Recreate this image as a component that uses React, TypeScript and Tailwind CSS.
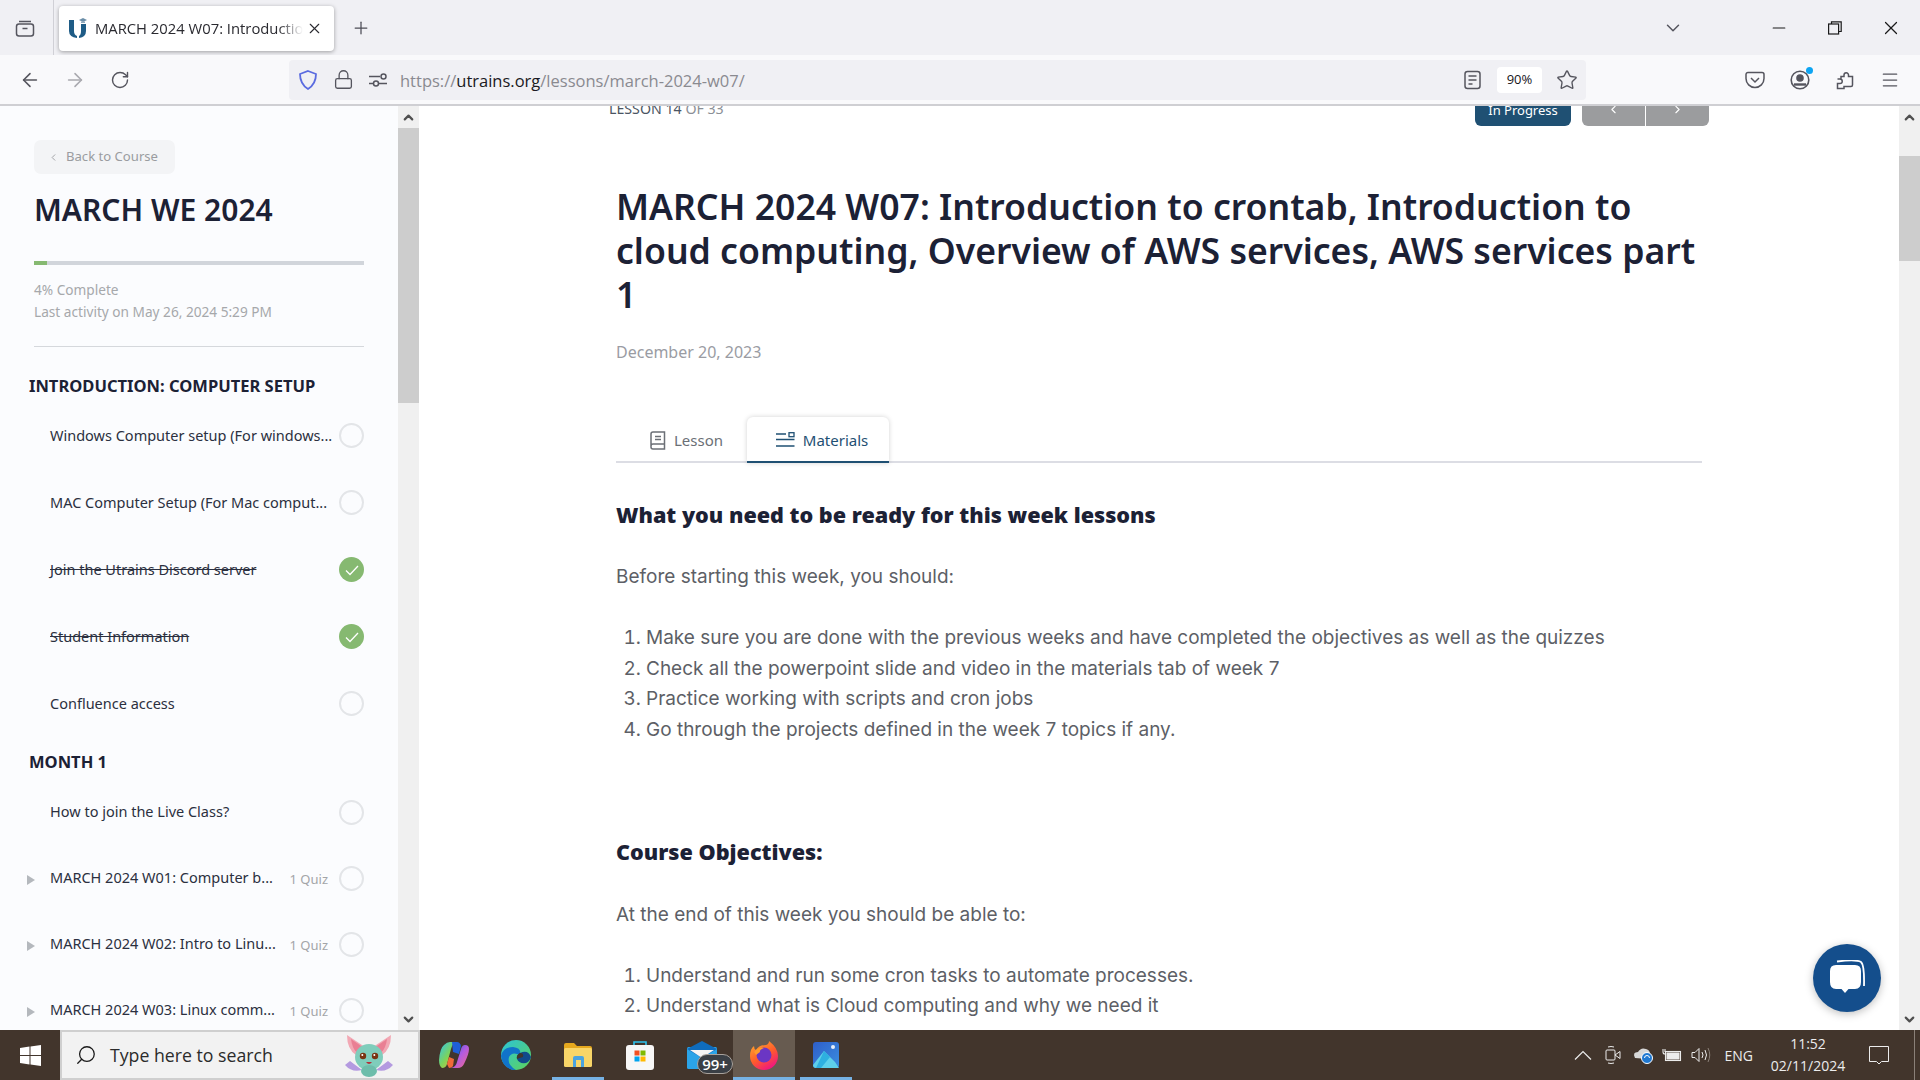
import { ArrowLeft, ArrowRight, ChevronDown, ChevronLeft, ChevronRight, ChevronUp, Lock, Menu, Minus, Plus, RotateCw, Search, Star, X } from 'lucide-react';

const headFont = "font-['Noto_Sans',sans-serif]";
const bodyFont = "font-['Inter',sans-serif]";

type Lesson = {
  title: string;
  done?: boolean;
  quiz?: boolean;
};

const introLessons: Lesson[] = [
  { title: 'Windows Computer setup (For windows...' },
  { title: 'MAC Computer Setup (For Mac comput...' },
  { title: 'Join the Utrains Discord server', done: true },
  { title: 'Student Information', done: true },
  { title: 'Confluence access' },
];

const monthLessons: Lesson[] = [
  { title: 'How to join the Live Class?' },
  { title: 'MARCH 2024 W01: Computer b...', quiz: true },
  { title: 'MARCH 2024 W02: Intro to Linu...', quiz: true },
  { title: 'MARCH 2024 W03: Linux comm...', quiz: true },
];

function LessonRow({ lesson, tall }: { lesson: Lesson; tall?: boolean }) {
  return (
    <div className={`flex shrink-0 items-center pl-[27px] pr-[34px] ${tall ? 'h-[67px]' : 'h-[66px]'}`}>
      <div className="w-[23px] shrink-0">
        {lesson.quiz && <div className="mt-1 h-0 w-0 border-y-[5px] border-l-[8px] border-y-transparent border-l-[#b4b8bd]" />}
      </div>
      <span className={`flex-1 whitespace-nowrap text-[14.5px] text-[#2b3040] ${lesson.done ? 'line-through' : ''}`}>{lesson.title}</span>
      {lesson.quiz && <span className="mr-[11px] mt-[3px] text-[13px] text-[#a3a5a8]">1 Quiz</span>}
      {lesson.done ? (
        <div className="flex h-[25px] w-[25px] shrink-0 items-center justify-center rounded-full bg-[#86b971]">
          <svg width="14" height="12" viewBox="0 0 14 12" fill="none" stroke="#fff" strokeWidth="1.3">
            <path d="M1 6.5 L5 10.5 L13 2" />
          </svg>
        </div>
      ) : (
        <div className="h-[25px] w-[25px] shrink-0 rounded-full border-2 border-[#e3e5e8]" />
      )}
    </div>
  );
}

function Scrollbar({ thumbTop, thumbHeight }: { thumbTop: string; thumbHeight: string }) {
  return (
    <div className="flex w-[21px] shrink-0 flex-col bg-[#f0f0f0]">
      <div className="flex h-[22px] shrink-0 items-center justify-center">
        <ChevronUp size={15} strokeWidth={3.5} className="text-[#505050]" />
      </div>
      <div className={`${thumbTop} ${thumbHeight} shrink-0 bg-[#cdcdcd]`} />
      <div className="flex-1" />
      <div className="flex h-[22px] shrink-0 items-center justify-center">
        <ChevronDown size={15} strokeWidth={3.5} className="text-[#505050]" />
      </div>
    </div>
  );
}

function TabStrip() {
  return (
    <div className="flex h-[55px] shrink-0 items-center bg-[#f0f0f4]">
      <div className="flex h-full w-[53px] shrink-0 items-center justify-center pr-[4px]">
        <svg width="20" height="20" viewBox="0 0 20 20" fill="none" stroke="#55555e" strokeWidth="1.5">
          <path d="M4 3.5h12" />
          <rect x="1.5" y="6" width="17" height="12" rx="2.5" />
          <path d="M7.5 10.5h5" />
        </svg>
      </div>
      <div className="h-full w-px bg-[#d0d0d6]" />
      <div className="ml-[5px] mt-[1px] flex h-[45px] w-[275px] items-center rounded-[4px] bg-white pl-[9px] shadow-[0_1px_4px_rgba(0,0,0,0.35)]">
        <svg width="20" height="22" viewBox="0 0 20 22" className="shrink-0">
          <path d="M1 3 h5 v11 q0 4 3 5 v2 q-8 -1 -8 -7z" fill="#1f5c86" />
          <path d="M13 7 h5 v7 q0 6 -7 7 v-2 q2 -1 2 -5z" fill="#1f5c86" />
          <path d="M11 3 l4 -2 l4 2 l-4 2z" fill="#6b8ea8" />
          <rect x="13" y="4.5" width="4" height="1.5" fill="#8fa9bd" />
        </svg>
        <span className="ml-[7px] w-[208px] overflow-hidden whitespace-nowrap font-['Open_Sans',sans-serif] text-[14.8px] text-[#2a2a30] [mask-image:linear-gradient(to_right,black_88%,transparent)]">
          MARCH 2024 W07: Introduction to crontab
        </span>
        <X size={17} strokeWidth={1.6} className="ml-[3px] shrink-0 text-[#2a2a30]" />
      </div>
      <Plus size={20} strokeWidth={1.5} className="ml-[17px] text-[#4c4c55]" />
      <div className="flex-1" />
      <ChevronDown size={22} strokeWidth={1.6} className="mr-[85px] text-[#55555e]" />
      <Minus size={20} strokeWidth={1.3} className="mr-[39px] text-[#1a1a1a]" />
      <svg width="14" height="14" viewBox="0 0 14 14" fill="none" stroke="#1a1a1a" strokeWidth="1.2" className="mr-[38px]">
        <rect x="0.6" y="3" width="10" height="10" />
        <path d="M3.5 3V0.8H13.2V10.5H10.6" />
      </svg>
      <X size={22} strokeWidth={1.3} className="mr-[18px] text-[#1a1a1a]" />
    </div>
  );
}

function Toolbar() {
  return (
    <div className="flex h-[51px] shrink-0 items-center border-b-2 border-[#cfcfd3] bg-[#f9f9fb]">
      <ArrowLeft size={22} strokeWidth={1.7} className="ml-[19px] text-[#55555e]" />
      <ArrowRight size={22} strokeWidth={1.7} className="ml-[23px] text-[#a9a9af]" />
      <RotateCw size={20} strokeWidth={1.7} className="ml-[24px] text-[#55555e]" />
      <div className="ml-[159px] flex h-10 w-[1297px] items-center rounded-[4px] bg-[#f0f0f4] pl-[9px]">
        <svg width="20" height="22" viewBox="0 0 20 22" fill="none" stroke="#5a6be0" strokeWidth="1.8" className="shrink-0">
          <path d="M10 2 L18 5 Q18 15 10 20 Q2 15 2 5z" />
        </svg>
        <Lock size={21} strokeWidth={1.5} className="ml-[15px] shrink-0 text-[#55555e]" />
        <svg width="20" height="16" viewBox="0 0 20 16" fill="none" stroke="#55555e" strokeWidth="1.5" className="ml-[14px] shrink-0">
          <path d="M1 4.5h11M1 11.5h4" />
          <circle cx="15.5" cy="4.5" r="2.5" />
          <circle cx="8" cy="11.5" r="2.5" />
          <path d="M11 11.5h8" />
        </svg>
        <span className="ml-[12px] mt-[3px] font-['Open_Sans',sans-serif] text-[16.5px] text-[#8a8a90]">
          https://<span className="text-[#1a1a22]">utrains.org</span>/lessons/march-2024-w07/
        </span>
        <div className="flex-1" />
        <svg width="17" height="20" viewBox="0 0 17 20" fill="none" stroke="#55555e" strokeWidth="1.5">
          <rect x="1" y="1.5" width="15" height="17" rx="2.5" />
          <path d="M4.5 6h8M4.5 10h8M4.5 14h4" />
        </svg>
        <div className="ml-[16px] flex h-[26px] w-[45px] items-center justify-center rounded-[4px] bg-white font-['Open_Sans',sans-serif] text-[13px] text-[#15141a]">90%</div>
        <Star size={22} strokeWidth={1.5} className="ml-[14px] mr-[8px] text-[#55555e]" />
      </div>
      <svg width="20" height="18" viewBox="0 0 20 18" fill="none" stroke="#55555e" strokeWidth="1.5" className="ml-[159px]">
        <path d="M3 1.5h14a2 2 0 0 1 2 2v4a9 9 0 0 1-18 0v-4a2 2 0 0 1 2-2z" />
        <path d="M6 7l4 4 4-4" />
      </svg>
      <div className="relative ml-[25px]">
        <svg width="20" height="20" viewBox="0 0 20 20" fill="none" stroke="#55555e" strokeWidth="1.6">
          <circle cx="10" cy="10" r="8.8" />
          <circle cx="10" cy="8" r="3" fill="#55555e" />
          <path d="M4 14.5h12" strokeWidth="2.4" />
        </svg>
        <div className="absolute -right-[3px] -top-[3px] h-[7px] w-[7px] rounded-full bg-[#0ea5f2]" />
      </div>
      <svg width="18" height="20" viewBox="0 0 18 20" fill="none" stroke="#55555e" strokeWidth="1.5" className="ml-[26px]">
        <path d="M1.5 9h3.5V6.5h3V5a2.2 2.2 0 0 1 4.5 0v1.5h4V15a1.5 1.5 0 0 1-1.5 1.5H8v2H1.5v-5H4a2 2 0 0 0 0-4.5z" />
      </svg>
      <Menu size={20} strokeWidth={1.5} className="ml-[26px] text-[#55555e]" />
    </div>
  );
}

function Sidebar() {
  return (
    <aside className={`flex w-[419px] shrink-0 overflow-hidden bg-[#fbfcfe] ${headFont}`}>
      <div className="w-[398px] shrink-0 overflow-hidden">
        <div className="pl-[34px] pr-[34px] pt-[34px]">
          <div className="flex h-[34px] w-[141px] items-center rounded-[7px] bg-[#f3f4f6] pl-[14px] text-[13.1px] text-[#9a9ca0]">
            <ChevronLeft size={11} strokeWidth={2} />
            <span className="ml-[7px]">Back to Course</span>
          </div>
          <h1 className="mt-[17px] text-[30px] font-semibold leading-[38px] text-[#1c2135]">MARCH WE 2024</h1>
          <div className="mt-[32px] h-1 bg-[#d1d5db]">
            <div className="h-1 w-[13px] bg-[#86b971]" />
          </div>
          <div className="mt-[14px] text-[13.65px] leading-[22px] text-[#a6a8ab]">
            <p>4% Complete</p>
            <p>Last activity on May 26, 2024 5:29 PM</p>
          </div>
          <div className="mt-[23px] h-px bg-[#d5d8dc]" />
        </div>
        <h3 className="mt-[27px] pl-[29px] text-[16.55px] font-bold leading-6 text-[#1c2135]">INTRODUCTION: COMPUTER SETUP</h3>
        <div className="mt-[4px]">
          {introLessons.map((lesson) => (
            <LessonRow key={lesson.title} lesson={lesson} tall />
          ))}
        </div>
        <h3 className="mt-[13px] pl-[29px] text-[16.55px] font-bold leading-6 text-[#1c2135]">MONTH 1</h3>
        <div className="mt-[5px]">
          {monthLessons.map((lesson) => (
            <LessonRow key={lesson.title} lesson={lesson} />
          ))}
        </div>
      </div>
      <Scrollbar thumbTop="mt-0" thumbHeight="h-[275px]" />
    </aside>
  );
}

function LessonContent() {
  return (
    <main className="relative flex flex-1 overflow-hidden bg-white">
      <div className="min-w-0 flex-1 overflow-hidden">
        <div className="-mt-[13px] ml-[190px] flex h-[33px] w-[1100px] items-center">
          <span className={`-mt-[1px] text-[14.2px] text-[#8b8f96] ${headFont}`}>
            <span className="text-[#4b5563]">LESSON 14</span> OF 33
          </span>
          <div className="flex-1" />
          <div className={`flex h-[33px] w-[96px] items-center justify-center rounded-b-[6px] bg-[#1f5073] pt-[2px] text-[13px] text-white ${headFont}`}>In Progress</div>
          <div className="ml-[11px] flex h-[33px] w-[127px] overflow-hidden rounded-b-[6px] text-white">
            <div className="flex w-[63px] items-center justify-center bg-[#9b9c9e]">
              <ChevronLeft size={13} strokeWidth={2} />
            </div>
            <div className="w-px bg-white" />
            <div className="flex flex-1 items-center justify-center bg-[#9b9c9e]">
              <ChevronRight size={13} strokeWidth={2} />
            </div>
          </div>
        </div>

        <div className="ml-[197px] w-[1086px]">
          <h1 className={`mt-[58px] text-[35.6px] font-semibold leading-[44px] text-[#1c2135] ${headFont}`}>
            MARCH 2024 W07: Introduction to crontab, Introduction to cloud computing, Overview of AWS services, AWS services part 1
          </h1>
          <p className={`mt-[24px] text-[16px] leading-6 text-[#9a9ca3] ${headFont}`}>December 20, 2023</p>

          <div className={`mt-[53px] flex h-[46px] border-b-2 border-[#dcdde4] ${headFont}`}>
            <div className="ml-[34px] flex items-center pt-[2px] text-[#6b6f76]">
              <svg width="16" height="19" viewBox="0 0 16 19" fill="none" stroke="#6b6f76" strokeWidth="1.5">
                <path d="M1 15V3a2 2 0 0 1 2-2h11.5v17H3a2 2 0 0 1-2-2v-1a2 2 0 0 1 2-2h11.5" />
                <path d="M5 5.5h6M5 8.5h6" />
              </svg>
              <span className="ml-[8px] text-[15px]">Lesson</span>
            </div>
            <div className="ml-[24px] flex h-[46px] w-[142px] items-center justify-center rounded-t-[6px] border-b-2 border-[#1f5073] bg-white pl-[8px] pt-[2px] text-[#1f5073] shadow-[0_0_5px_rgba(0,0,0,0.18)]">
              <svg width="19" height="16" viewBox="0 0 19 16" fill="none" stroke="#1f5073" strokeWidth="1.3">
                <path d="M0 2h10M0 7.5h18.5M0 14h18.5" />
                <rect x="13" y="0.7" width="5" height="4" />
              </svg>
              <span className="ml-[8px] text-[15px]">Materials</span>
            </div>
          </div>

          <div className={`text-[19px] text-[#5d5f66] ${bodyFont}`}>
            <h2 className={`mt-[38px] text-[21.6px] font-black leading-7 text-[#1c2135] ${headFont}`}>What you need to be ready for this week lessons</h2>
            <p className="mt-[34px] leading-7">Before starting this week, you should:</p>
            <ol className="mt-[32px] list-decimal pl-[30px] leading-[30.5px]">
              <li>Make sure you are done with the previous weeks and have completed the objectives as well as the quizzes</li>
              <li>Check all the powerpoint slide and video in the materials tab of week 7</li>
              <li>Practice working with scripts and cron jobs</li>
              <li>Go through the projects defined in the week 7 topics if any.</li>
            </ol>
            <h2 className={`mt-[93px] text-[21.6px] font-black leading-7 text-[#1c2135] ${headFont}`}>Course Objectives:</h2>
            <p className="mt-[35px] leading-7">At the end of this week you should be able to:</p>
            <ol className="mt-[32px] list-decimal pl-[30px] leading-[30px]">
              <li>Understand and run some cron tasks to automate processes.</li>
              <li>Understand what is Cloud computing and why we need it</li>
            </ol>
          </div>
        </div>
      </div>
      <Scrollbar thumbTop="mt-[28px]" thumbHeight="h-[105px]" />

      <div className="absolute bottom-[18px] right-[39px] flex h-[68px] w-[68px] items-center justify-center rounded-full bg-[#144e8c] shadow-[0_2px_8px_rgba(0,0,0,0.25)]">
        <svg width="38" height="36" viewBox="0 0 38 36">
          <path d="M9 1.5 Q28 -1 33 2 Q36.5 5 36 26" fill="none" stroke="#fff" strokeWidth="1.8" />
          <path d="M8 5 H27 Q33 5 33 11 V22 Q33 29 27 29 H20.5 L17 33 L13.5 29 H8 Q2 29 2 22 V11 Q2 5 8 5z" fill="#fff" />
        </svg>
      </div>
    </main>
  );
}

function TaskIcon({ active, underline, children }: { active?: boolean; underline?: boolean; children: React.ReactNode }) {
  return (
    <div className={`relative flex h-full w-[62px] shrink-0 items-center justify-center ${active ? 'bg-[#675b50]' : ''}`}>
      {children}
      {underline && <div className={`absolute bottom-0 h-[3px] bg-[#76b2e4] ${active ? 'inset-x-0' : 'inset-x-[5px]'}`} />}
    </div>
  );
}

function Taskbar() {
  return (
    <footer className="flex h-[50px] shrink-0 items-center bg-[#42352c] font-['Open_Sans',sans-serif] text-white">
      <div className="flex h-full w-[60px] shrink-0 items-center justify-center">
        <svg width="21" height="21" viewBox="0 0 21 21" fill="#fff">
          <path d="M0 3 L9.5 1.6 V10 H0z M10.5 1.4 L21 0 V10 H10.5z M0 11 H9.5 V19.4 L0 18z M10.5 11 H21 V21 L10.5 19.6z" />
        </svg>
      </div>
      <div className="relative flex h-full w-[360px] shrink-0 items-center border-2 border-[#cfcfcf] bg-[#f2f2f2] pl-[13px]">
        <Search size={22} strokeWidth={1.4} className="-scale-x-100 text-[#1a1a1a]" />
        <span className="ml-[13px] text-[17.7px] text-[#2b2b2b]">Type here to search</span>
        <svg width="50" height="44" viewBox="0 0 50 44" className="absolute right-[24px] top-[1px]">
          <path d="M6 28 L1 32 Q8 40 18 37z M44 28 L49 32 Q42 40 32 37z" fill="#b49ae0" />
          <path d="M21 14 L3 2 Q3 16 12 22z M29 14 L47 2 Q47 16 38 22z" fill="#f2a8b4" />
          <path d="M20 15 L7 6 Q8 15 13 20z M30 15 L43 6 Q42 15 37 20z" fill="#e97f93" />
          <ellipse cx="25" cy="24" rx="14" ry="13" fill="#7fcdbb" />
          <ellipse cx="25" cy="38" rx="8" ry="6" fill="#6dbdab" />
          <circle cx="19" cy="23" r="3.2" fill="#7a3412" />
          <circle cx="31" cy="23" r="3.2" fill="#7a3412" />
          <circle cx="18.3" cy="22" r="1" fill="#fff" />
          <circle cx="30.3" cy="22" r="1" fill="#fff" />
          <path d="M22 29 Q25 33 28 29z" fill="#b3303a" />
        </svg>
      </div>

      <div className="ml-[3px] flex h-full items-center">
        <TaskIcon>
          <svg width="32" height="30" viewBox="0 0 32 30">
            <defs>
              <linearGradient id="copA" x1="0" y1="0" x2="1" y2="1">
                <stop offset="0" stopColor="#2ec4f0" />
                <stop offset="0.5" stopColor="#7dd35a" />
                <stop offset="1" stopColor="#f7b733" />
              </linearGradient>
              <linearGradient id="copB" x1="0" y1="0" x2="1" y2="1">
                <stop offset="0" stopColor="#2a5fe0" />
                <stop offset="0.5" stopColor="#b45be0" />
                <stop offset="1" stopColor="#f26a8a" />
              </linearGradient>
            </defs>
            <path d="M12 2 H19 Q15 2 13 9 L9 24 Q8 28 4 28 Q1 26 1 20 Q2 8 6 5 Q9 2 12 2z" fill="url(#copA)" />
            <path d="M13 28 H20 Q24 28 26 24 Q31 14 31 9 Q31 5 27 5 Q24 5 23 9 L19 22 Q18 27 13 28z" fill="url(#copB)" />
            <path d="M14 2 H19 Q22 2 23 6 L21 14 L15 12z" fill="#1f5fd8" />
            <path d="M9 24 L11 17 L16 19 L15 26 Q14 28 11 28z" fill="#f06a3a" />
          </svg>
        </TaskIcon>
        <TaskIcon>
          <svg width="32" height="32" viewBox="0 0 32 32">
            <defs>
              <linearGradient id="edgeA" x1="0" y1="0" x2="1" y2="1">
                <stop offset="0" stopColor="#2bc3d8" />
                <stop offset="1" stopColor="#5fd35a" />
              </linearGradient>
            </defs>
            <circle cx="16" cy="16" r="15" fill="url(#edgeA)" />
            <path d="M1 17 Q3 8 13 8 Q22 9 20 16 Q12 12 9 18 Q7 26 16 31 Q3 31 1 17z" fill="#1173c9" />
            <path d="M31 18 Q28 10 20 14 Q16 16 17 20 Q19 25 26 24 Q30 22 31 18z" fill="#114a8b" />
            <path d="M20 14 Q24 14 23 18 Q19 19 17 20 Q16 16 20 14z" fill="#42352c" />
          </svg>
        </TaskIcon>
        <TaskIcon underline>
          <svg width="28" height="24" viewBox="0 0 28 24">
            <path d="M0 2 Q0 0 2 0 H10 L13 3 H26 Q28 3 28 5 V10 H0z" fill="#e5a81e" />
            <rect y="5" width="28" height="19" rx="1.5" fill="#f8d568" />
            <path d="M9 24 V15 Q9 13 11 13 H18 Q20 13 20 15 V24 H17 V17 H12 V24z" fill="#4aa3df" />
          </svg>
        </TaskIcon>
        <TaskIcon>
          <svg width="30" height="30" viewBox="0 0 30 30">
            <path d="M9 6 V2 H21 V6" fill="none" stroke="#2ec4f0" strokeWidth="1.6" />
            <rect x="1" y="5" width="28" height="25" rx="3" fill="#f7f7f7" />
            <rect x="9.5" y="10.5" width="5" height="5" fill="#f25022" />
            <rect x="15.5" y="10.5" width="5" height="5" fill="#7fba00" />
            <rect x="9.5" y="16.5" width="5" height="5" fill="#00a4ef" />
            <rect x="15.5" y="16.5" width="5" height="5" fill="#ffb900" />
          </svg>
        </TaskIcon>
        <TaskIcon>
          <div className="relative">
            <svg width="30" height="28" viewBox="0 0 30 28">
              <rect y="6" width="30" height="22" rx="1.5" fill="#2ba4e8" />
              <path d="M0 8 L15 0 L30 8 L15 17z" fill="#0f6cbd" />
              <path d="M3 9 H27 L15 17z" fill="#f5f5f5" />
            </svg>
            <div className="absolute -right-[16px] -bottom-[5px] flex h-5 w-[36px] items-center justify-center rounded-full border border-[#a8a29c] bg-[#3a3f45] text-[15px] font-semibold leading-none">99+</div>
          </div>
        </TaskIcon>
        <TaskIcon active underline>
          <svg width="30" height="30" viewBox="0 0 30 30">
            <defs>
              <linearGradient id="foxA" x1="0" y1="0" x2="0.6" y2="1">
                <stop offset="0" stopColor="#ffb32c" />
                <stop offset="0.6" stopColor="#ff5a2c" />
                <stop offset="1" stopColor="#f0197d" />
              </linearGradient>
            </defs>
            <path d="M20 1 Q29 8 29 16 A14 14 0 0 1 1 16 Q1 9 5 6 Q5 9 7 10 Q10 5 17 5 Q20 4 20 1z" fill="url(#foxA)" />
            <circle cx="15" cy="15" r="7.5" fill="#6b36c4" />
            <path d="M5 12 Q9 7 15 8 Q10 10 11 12 L7 15z" fill="#ff9a2c" />
          </svg>
        </TaskIcon>
        <TaskIcon underline>
          <svg width="26" height="26" viewBox="0 0 26 26">
            <defs>
              <linearGradient id="picA" x1="0" y1="0" x2="1" y2="1">
                <stop offset="0" stopColor="#2e5ec9" />
                <stop offset="1" stopColor="#3b8fe0" />
              </linearGradient>
            </defs>
            <rect width="26" height="26" rx="3" fill="url(#picA)" />
            <circle cx="20" cy="5" r="2" fill="#e8f0fa" />
            <path d="M0 23 L11 9 L22 20 L26 26 H3 Q0 26 0 23z" fill="#5ed0ea" />
            <path d="M11 9 L17 15 L8 26 H3z" fill="#2eb0e0" />
          </svg>
        </TaskIcon>
      </div>

      <div className="flex-1" />

      <div className="flex h-full items-center text-[#ececec]">
        <svg width="18" height="10" viewBox="0 0 18 10" fill="none" stroke="#ececec" strokeWidth="1.2">
          <path d="M1 9.5 L9 1.5 L17 9.5" />
        </svg>
        <svg width="16" height="18" viewBox="0 0 16 18" fill="none" stroke="#ececec" strokeWidth="1" className="ml-[13px]">
          <rect x="1" y="4" width="9" height="10" rx="1" />
          <path d="M10 9 L15 5.5 V12.5 L10 9z M3 1 Q6 0 9 1 M3 17 Q6 18 9 17" />
        </svg>
        <svg width="22" height="18" viewBox="0 0 22 18" className="ml-[11px]">
          <path d="M3 12 Q0 6 6 6 Q9 1 14 3 Q18 4 18 8 Q20 12 16 13z" fill="#d8d8d8" />
          <circle cx="15" cy="12" r="5.5" fill="#1f78d1" stroke="#fff" strokeWidth="1" />
          <path d="M12.5 12 a2.5 2.5 0 0 1 5 0" fill="none" stroke="#fff" strokeWidth="1" />
        </svg>
        <svg width="20" height="14" viewBox="0 0 20 14" fill="none" stroke="#ececec" strokeWidth="1.1" className="ml-[8px]">
          <rect x="3.5" y="3.5" width="15" height="9" />
          <rect x="5" y="5" width="12" height="6" fill="#ececec" />
          <path d="M1 1v3a2 2 0 0 0 2 2M3 1v3" />
        </svg>
        <svg width="20" height="16" viewBox="0 0 20 16" fill="none" stroke="#ececec" strokeWidth="1" className="ml-[9px]">
          <path d="M1 5.5 H4 L8 1.5 V14.5 L4 10.5 H1z" />
          <path d="M11 5 Q13 8 11 11 M14 3 Q17 8 14 13" />
          <path d="M17 1 Q20.5 8 17 15" stroke="#8a8078" />
        </svg>
        <span className="ml-[14px] text-[14px]">ENG</span>
        <div className="ml-[15px] w-[80px] text-center text-[14px] leading-[22px]">
          <p>11:52</p>
          <p>02/11/2024</p>
        </div>
        <svg width="20" height="19" viewBox="0 0 20 19" fill="none" stroke="#ececec" strokeWidth="1" className="ml-[21px]">
          <path d="M0.5 0.5 H19.5 V15.5 H12.5 L10 18 L7.5 15.5 H0.5z" />
        </svg>
        <div className="ml-[25px] mr-[5px] h-full w-px bg-[#8a8078]" />
      </div>
    </footer>
  );
}

export default function App() {
  return (
    <div className="flex h-screen w-screen flex-col overflow-hidden bg-white">
      <TabStrip />
      <Toolbar />
      <div className="flex min-h-0 flex-1">
        <Sidebar />
        <LessonContent />
      </div>
      <Taskbar />
    </div>
  );
}
